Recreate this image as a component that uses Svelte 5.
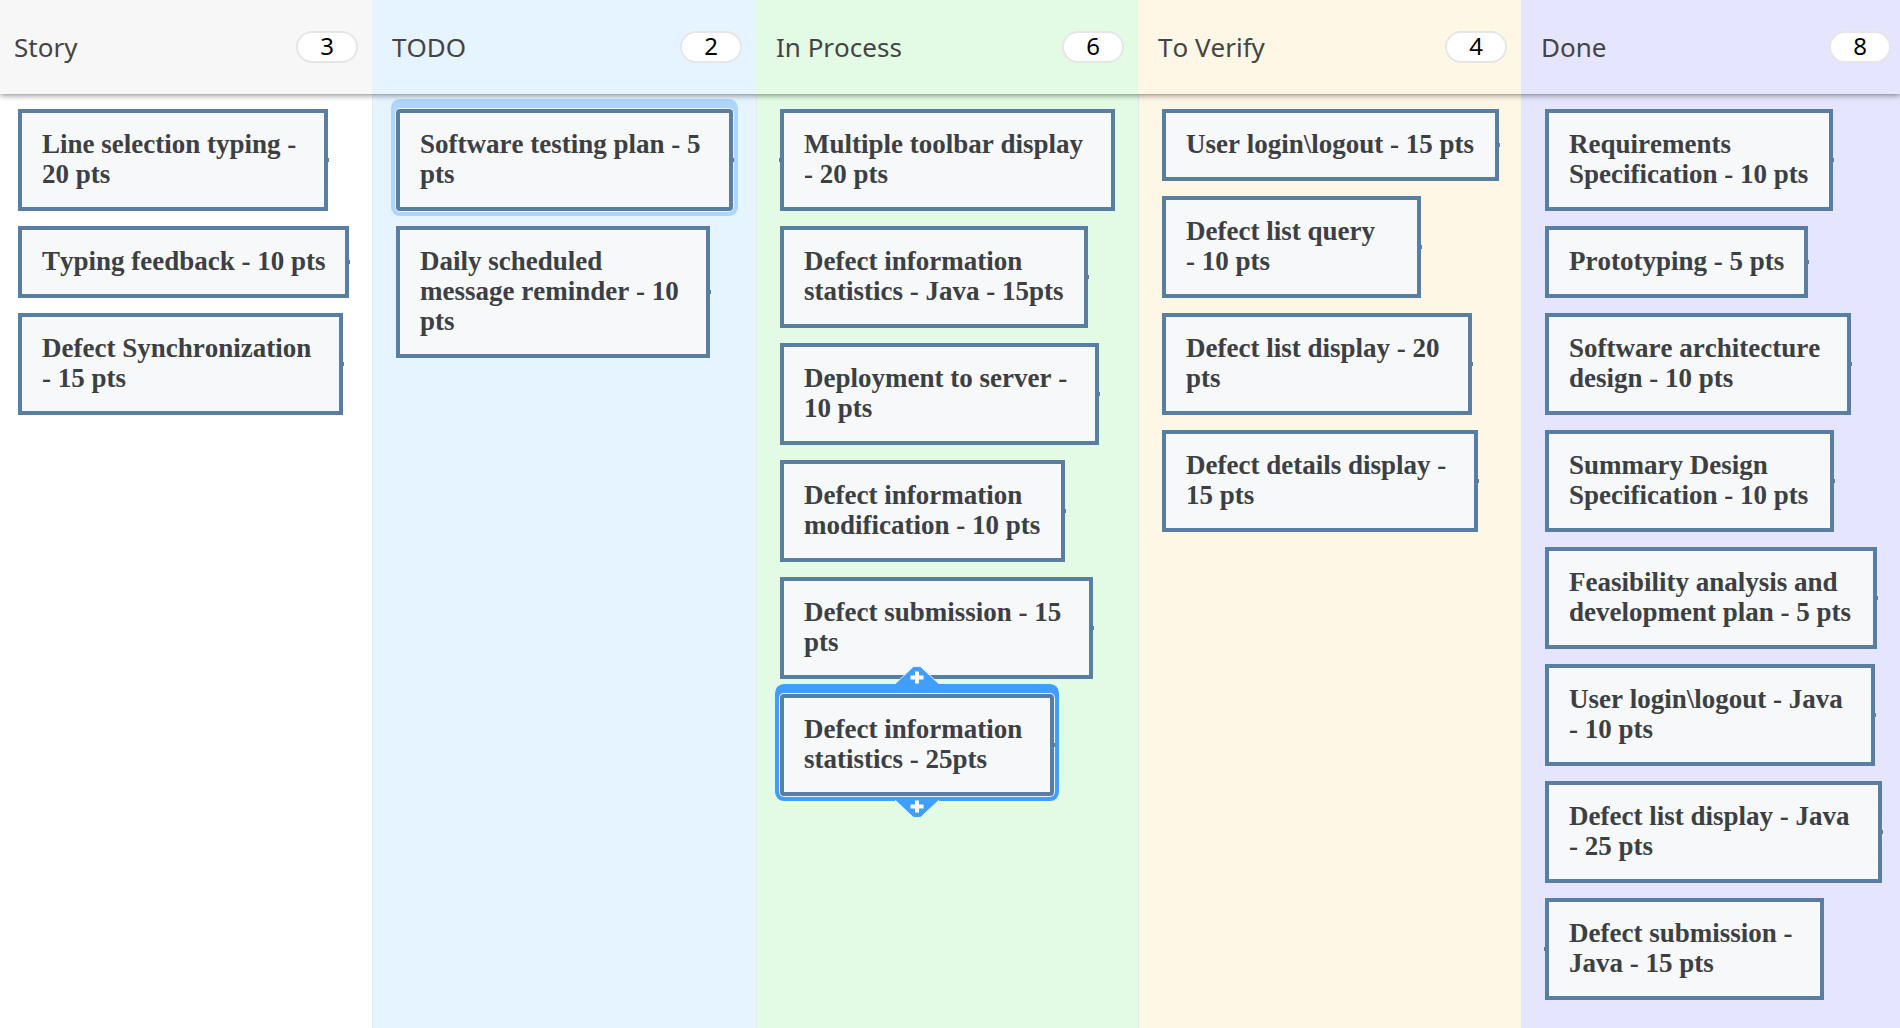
<script>
  const columns = [
    {
      id: 'story',
      title: 'Story',
      cards: [
        { text: 'Line selection typing - 20 pts', width: 310 },
        { text: 'Typing feedback - 10 pts', width: 331 },
        { text: 'Defect Synchronization -\u2060\u00a015\u00a0pts', width: 325 },
      ],
    },
    {
      id: 'todo',
      title: 'TODO',
      cards: [
        { text: 'Software testing plan - 5 pts', width: 337, state: 'hovered' },
        { text: 'Daily scheduled message reminder - 10 pts', width: 314 },
      ],
    },
    {
      id: 'process',
      title: 'In Process',
      cards: [
        { text: 'Multiple toolbar display -\u2060\u00a020\u00a0pts', width: 335, port: 'left' },
        { text: 'Defect information statistics - Java - 15pts', width: 308 },
        { text: 'Deployment to server - 10 pts', width: 319 },
        { text: 'Defect information modification - 10 pts', width: 285 },
        { text: 'Defect submission - 15 pts', width: 313 },
        { text: 'Defect information statistics - 25pts', width: 274, state: 'selected' },
      ],
    },
    {
      id: 'verify',
      title: 'To Verify',
      cards: [
        { text: 'User login\\logout - 15 pts', width: 337 },
        { text: 'Defect list query -\u2060\u00a010\u00a0pts', width: 259 },
        { text: 'Defect list display - 20 pts', width: 310 },
        { text: 'Defect details display - 15 pts', width: 316 },
      ],
    },
    {
      id: 'done',
      title: 'Done',
      cards: [
        { text: 'Requirements Specification - 10 pts', width: 288 },
        { text: 'Prototyping - 5 pts', width: 263 },
        { text: 'Software architecture design - 10 pts', width: 306 },
        { text: 'Summary Design Specification - 10 pts', width: 289 },
        { text: 'Feasibility analysis and development plan - 5 pts', width: 332 },
        { text: 'User login\\logout - Java -\u2060\u00a010\u00a0pts', width: 330 },
        { text: 'Defect list display - Java -\u2060\u00a025\u00a0pts', width: 337 },
        { text: 'Defect submission - Java - 15 pts', width: 279, port: 'left' },
      ],
    },
  ];
</script>

<main class="board">
  <header class="heads grid">
    {#each columns as column}
      <div class="head {column.id}">
        <h2 id="title-{column.id}">{column.title}</h2>
        <span class="count">{column.cards.length}</span>
      </div>
    {/each}
  </header>

  <div class="lanes grid">
    {#each columns as column}
      <ul class="lane {column.id}" aria-labelledby="title-{column.id}">
        {#each column.cards as card}
          <li class="card {card.state ?? ''} {card.port ?? 'right'}" style:width="{card.width}px">
            {card.text}
            {#if card.state === 'selected'}
              <button class="insert above" aria-label="Add card above">
                <svg viewBox="0 0 44 18" width="44" height="18">
                  <path class="tab" d="M0 18 L17.5 1.5 Q18.5 .5 20 .5 H24 Q25.5 .5 26.5 1.5 L44 18" />
                  <path class="plus" d="M15.5 11.5 H28.5 M22 5.5 V17.5" />
                </svg>
              </button>
              <button class="insert below" aria-label="Add card below">
                <svg viewBox="0 0 44 18" width="44" height="18">
                  <path class="tab" d="M0 0 L17.5 16.5 Q18.5 17.5 20 17.5 H24 Q25.5 17.5 26.5 16.5 L44 0" />
                  <path class="plus" d="M15.5 6.5 H28.5 M22 .5 V12.5" />
                </svg>
              </button>
            {/if}
          </li>
        {/each}
      </ul>
    {/each}
  </div>
</main>

<style>
  :global(body) {
    margin: 0;
  }

  .board {
    display: flex;
    flex-direction: column;
    min-height: 100vh;
    overflow-x: hidden;
    font-kerning: none;
  }

  .grid {
    display: grid;
    grid-template-columns: 372fr 384fr 382fr 383fr 379fr;
  }

  .heads {
    position: relative;
    z-index: 1;
    box-shadow: 0 1px 6px rgba(0, 0, 0, 0.5);
  }

  .lanes {
    flex: 1;
  }

  .head {
    box-sizing: border-box;
    display: flex;
    align-items: center;
    justify-content: space-between;
    height: 94px;
    padding: 0 14px 0 20px;
    font-family: 'Noto Sans', 'Open Sans', sans-serif;
  }

  .head.story {
    padding-left: 14px;
    background: #f7f7f7;
  }

  .head.done {
    padding-right: 9px;
  }

  h2 {
    margin: 0;
    color: #444;
    font-size: 26px;
    font-weight: 400;
    line-height: 36px;
  }

  .count {
    box-sizing: border-box;
    width: 62px;
    height: 32px;
    border: 2px solid #e6e6e8;
    border-radius: 16px;
    background: #fff;
    color: #000;
    font-size: 24px;
    line-height: 26px;
    text-align: center;
  }

  .lane {
    display: flex;
    flex-direction: column;
    align-items: flex-start;
    gap: 15px;
    margin: 0;
    padding: 15px 0 20px 23px;
    border-left: 1px solid #e4ebee;
    list-style: none;
  }

  .lane.story {
    padding-left: 18px;
    border-left: 0;
  }

  .todo {
    background: #e5f4ff;
  }

  .process {
    background: #e3fbe5;
  }

  .verify {
    background: #fff7e6;
  }

  .done {
    background: #e6e5ff;
  }

  .card {
    position: relative;
    box-sizing: border-box;
    max-width: 100%;
    padding: 16px 14px 18px 20px;
    border: 4px solid #587ea3;
    background: #f7f8fa;
    color: #3d4043;
    font-family: 'Liberation Serif', 'Times New Roman', serif;
    font-size: 27px;
    font-weight: 700;
    line-height: 30px;
  }

  .card::after {
    content: '';
    position: absolute;
    top: 50%;
    width: 1px;
    height: 4px;
    margin-top: -2px;
    background: #587ea3;
  }

  .card.right::after {
    right: -5px;
  }

  .card.left::after {
    left: -5px;
  }

  .hovered,
  .selected {
    border-radius: 4px;
    box-shadow:
      0 0 0 1px #e8f4ff,
      0 0 0 5px var(--ring),
      0 -5px 0 5px var(--ring);
  }

  .hovered {
    --ring: #aed5fc;
  }

  .selected {
    --ring: #409eff;
  }

  .insert {
    position: absolute;
    left: 50%;
    width: 44px;
    height: 18px;
    margin-left: -22px;
    padding: 0;
    border: 0;
    background: none;
    cursor: pointer;
  }

  .insert svg {
    display: block;
  }

  .above {
    top: -32px;
  }

  .below {
    bottom: -26px;
  }

  .tab {
    fill: #409eff;
    stroke: #e3f1ff;
    stroke-width: 1;
  }

  .plus {
    fill: none;
    stroke: #fff;
    stroke-width: 4;
  }
</style>
